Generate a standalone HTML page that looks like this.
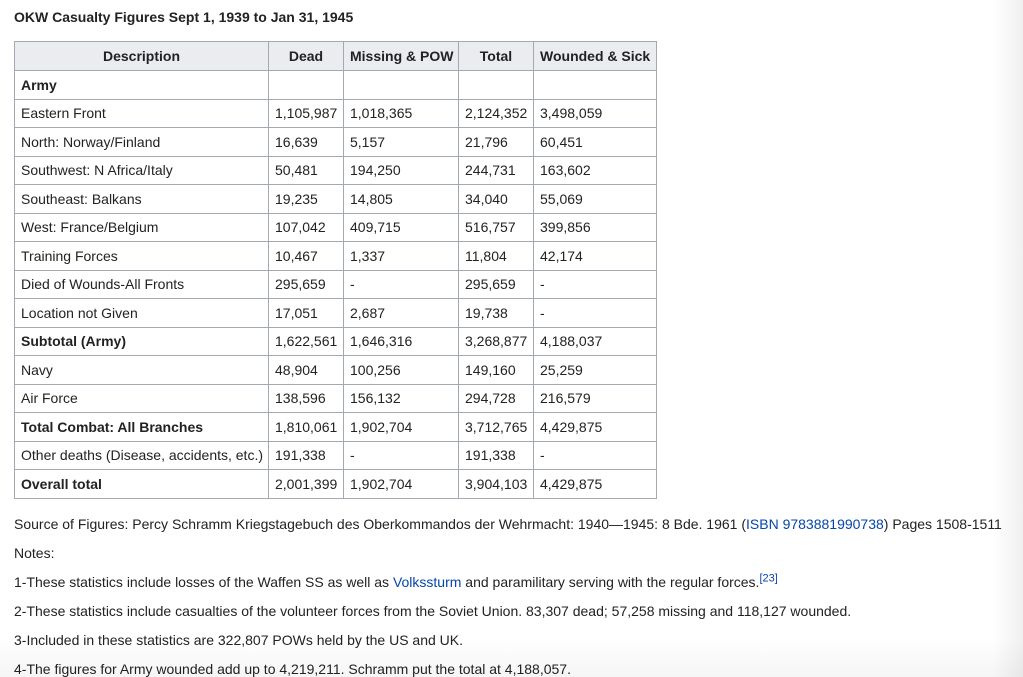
<!DOCTYPE html>
<html><head><meta charset="utf-8"><style>
html,body{margin:0;padding:0;background:#fff;width:1023px;height:677px;overflow:hidden;position:relative}
body{font-family:"Liberation Sans",Arial,sans-serif;font-size:14px;color:#222}
.title{position:absolute;left:14px;top:9px;font-weight:bold;font-size:14px}
table{position:absolute;left:14px;top:41px;border-collapse:collapse;table-layout:fixed;width:642px}
td,th{border:1px solid #a2a9b1;height:28.5px;padding:0 6px;white-space:nowrap;text-align:left;box-sizing:border-box;overflow:hidden}
th{background:#eaecf0;text-align:center;font-weight:bold;height:29px}
.b{font-weight:bold}
.p{position:absolute;left:14px;white-space:nowrap}
a{color:#0645ad;text-decoration:none}
sup{font-size:11px;line-height:0}
.shade{position:absolute;right:0;top:0;width:30px;height:677px;background:linear-gradient(to right,rgba(0,0,0,0),rgba(0,0,0,0.06))}
.shadeb{position:absolute;left:0;bottom:0;width:1023px;height:40px;background:linear-gradient(to bottom,rgba(0,0,0,0),rgba(0,0,0,0.04))}
</style></head><body>
<div class="title">OKW Casualty Figures Sept 1, 1939 to Jan 31, 1945</div>
<table>
<colgroup><col style="width:254px"><col style="width:75px"><col style="width:115px"><col style="width:75px"><col style="width:123px"></colgroup>
<tr><th>Description</th><th>Dead</th><th>Missing &amp; POW</th><th>Total</th><th>Wounded &amp; Sick</th></tr>
<tr><td class="b">Army</td><td></td><td></td><td></td><td></td></tr>
<tr><td>Eastern Front</td><td>1,105,987</td><td>1,018,365</td><td>2,124,352</td><td>3,498,059</td></tr>
<tr><td>North: Norway/Finland</td><td>16,639</td><td>5,157</td><td>21,796</td><td>60,451</td></tr>
<tr><td>Southwest: N Africa/Italy</td><td>50,481</td><td>194,250</td><td>244,731</td><td>163,602</td></tr>
<tr><td>Southeast: Balkans</td><td>19,235</td><td>14,805</td><td>34,040</td><td>55,069</td></tr>
<tr><td>West: France/Belgium</td><td>107,042</td><td>409,715</td><td>516,757</td><td>399,856</td></tr>
<tr><td>Training Forces</td><td>10,467</td><td>1,337</td><td>11,804</td><td>42,174</td></tr>
<tr><td>Died of Wounds-All Fronts</td><td>295,659</td><td>-</td><td>295,659</td><td>-</td></tr>
<tr><td>Location not Given</td><td>17,051</td><td>2,687</td><td>19,738</td><td>-</td></tr>
<tr><td class="b">Subtotal (Army)</td><td>1,622,561</td><td>1,646,316</td><td>3,268,877</td><td>4,188,037</td></tr>
<tr><td>Navy</td><td>48,904</td><td>100,256</td><td>149,160</td><td>25,259</td></tr>
<tr><td>Air Force</td><td>138,596</td><td>156,132</td><td>294,728</td><td>216,579</td></tr>
<tr><td class="b">Total Combat: All Branches</td><td>1,810,061</td><td>1,902,704</td><td>3,712,765</td><td>4,429,875</td></tr>
<tr><td>Other deaths (Disease, accidents, etc.)</td><td>191,338</td><td>-</td><td>191,338</td><td>-</td></tr>
<tr><td class="b">Overall total</td><td>2,001,399</td><td>1,902,704</td><td>3,904,103</td><td>4,429,875</td></tr>
</table>
<div class="p" style="top:516px">Source of Figures: Percy Schramm Kriegstagebuch des Oberkommandos der Wehrmacht: 1940—1945: 8 Bde. 1961 (<a>ISBN 9783881990738</a>) Pages 1508-1511</div>
<div class="p" style="top:545px">Notes:</div>
<div class="p" style="top:574px">1-These statistics include losses of the Waffen SS as well as <a>Volkssturm</a> and paramilitary serving with the regular forces.<sup><a>[23]</a></sup></div>
<div class="p" style="top:603px">2-These statistics include casualties of the volunteer forces from the Soviet Union. 83,307 dead; 57,258 missing and 118,127 wounded.</div>
<div class="p" style="top:632px">3-Included in these statistics are 322,807 POWs held by the US and UK.</div>
<div class="p" style="top:661px">4-The figures for Army wounded add up to 4,219,211. Schramm put the total at 4,188,057.</div>
<div class="shade"></div><div class="shadeb"></div>
</body></html>
